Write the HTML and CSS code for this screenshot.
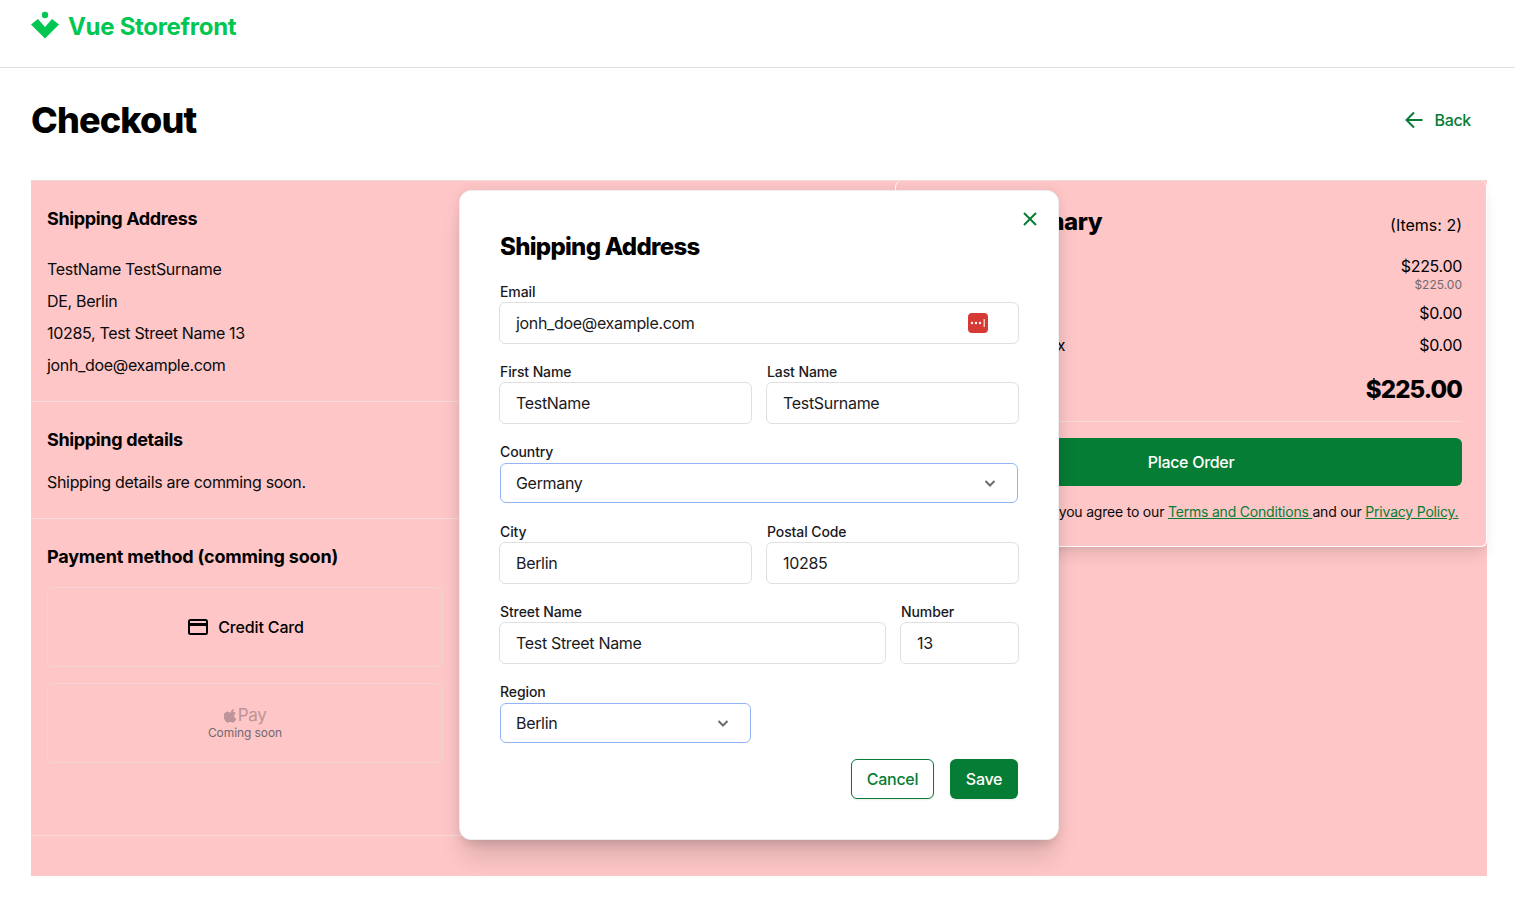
FILE: index.html
```html
<!DOCTYPE html>
<html lang="en">
<head>
<meta charset="utf-8">
<title>Checkout</title>
<link rel="stylesheet" href="styles.css">
</head>
<body>
<header class="topbar">
  <a class="logo">
    <svg class="logo-mark" width="28" height="28" viewBox="0 0 28 28"><circle cx="14" cy="4" r="3.200" fill="#02c652"/><path d="M0 13.500 7 8 14 16 21 8 28 13.500 14 27.500Z" fill="#02c652"/></svg>
    <span class="logo-text">Vue Storefront</span>
  </a>
</header>
<div class="title-row">
  <h1 class="page-title">Checkout</h1>
  <a class="back">
    <svg width="24" height="24" viewBox="0 0 24 24" fill="none" stroke="#067d35" stroke-width="2"><path d="M20.500 12H4.500M12 4.500 4.500 12l7.500 7.500"/></svg>
    <span>Back</span>
  </a>
</div>
<main class="checkout">
  <div class="left-col">
    <section class="panel panel-address">
      <h2 class="panel-title">Shipping Address</h2>
      <p class="line">TestName TestSurname</p>
      <p class="line">DE, Berlin</p>
      <p class="line">10285, Test Street Name 13</p>
      <p class="line">jonh_doe@example.com</p>
    </section>
    <section class="panel panel-details">
      <h2 class="panel-title">Shipping details</h2>
      <p class="line">Shipping details are comming soon.</p>
    </section>
    <section class="panel panel-payment">
      <h2 class="panel-title">Payment method (comming soon)</h2>
      <div class="pay-list">
        <div class="pay-box">
          <svg width="24" height="24" viewBox="0 0 24 24" fill="none" stroke="#000" stroke-width="2"><rect x="3" y="5" width="18" height="14" rx="1.500"/><path d="M3 9.500h18" stroke-width="3"/></svg>
          <span class="pay-label">Credit Card</span>
        </div>
        <div class="pay-box pay-soon">
          <div class="apple-pay">
            <svg width="13" height="15" viewBox="0 0 14 16"><path fill="#bd9499" d="M10.600 1c.1 1-.3 1.800-.8 2.400-.6.700-1.400 1.100-2.200 1-.1-.9.300-1.800.8-2.300C9 1.400 9.900 1 10.600 1ZM13.400 11.500c-.4.900-.6 1.300-1.100 2-.7 1-1.600 2.200-2.800 2.200-1 0-1.300-.7-2.700-.7s-1.700.7-2.700.7c-1.200 0-2.100-1.100-2.800-2.100C-.6 11-.8 7.700.4 5.900 1.200 4.600 2.500 3.900 3.700 3.900c1.200 0 2 .8 3 .8s1.600-.8 3-.8c1.100 0 2.200.6 3 1.600-2.600 1.500-2.200 5 .7 6Z"/></svg>
            <span>Pay</span>
          </div>
          <span class="soon-text">Coming soon</span>
        </div>
      </div>
    </section>
  </div>
  <aside class="summary">
    <div class="summary-head">
      <h2 class="summary-title">Order Summary</h2>
      <span class="items">(Items: 2)</span>
    </div>
    <div class="sum-row sum-first"><span>Subtotal</span><span class="amount-stack"><span>$225.00</span><small>$225.00</small></span></div>
    <div class="sum-row"><span>Delivery</span><span>$0.00</span></div>
    <div class="sum-row"><span>Estimated Sales Tax</span><span>$0.00</span></div>
    <div class="sum-total"><span>Total</span><span>$225.00</span></div>
    <div class="place-wrap">
      <button class="place-order">Place Order</button>
      <p class="terms">By placing my order, you agree to our <a>Terms and Conditions </a>and our <a>Privacy Policy.</a></p>
    </div>
  </aside>
</main>
<div class="modal">
  <svg class="modal-close" width="24" height="24" viewBox="0 0 24 24" fill="none" stroke="#067d35" stroke-width="2"><path d="M6 6l12 12M18 6 6 18"/></svg>
  <h2 class="modal-title">Shipping Address</h2>
  <form class="form">
    <label class="field span-6"><span class="label">Email</span>
      <span class="input input-pass">jonh_doe@example.com
        <svg class="pass-icon" width="20" height="20" viewBox="0 0 20 20"><rect width="20" height="20" rx="4" fill="#d63a34"/><circle cx="4" cy="10" r="1.200" fill="#fff"/><circle cx="8" cy="10" r="1.200" fill="#fff"/><circle cx="12" cy="10" r="1.200" fill="#fff"/><rect x="15.500" y="6" width="1.500" height="8" fill="#f3c5c2"/></svg>
      </span>
    </label>
    <label class="field span-3"><span class="label">First Name</span><span class="input">TestName</span></label>
    <label class="field span-3"><span class="label">Last Name</span><span class="input">TestSurname</span></label>
    <label class="field span-6"><span class="label">Country</span>
      <span class="select">Germany<svg width="20" height="20" viewBox="0 0 20 20" fill="none" stroke="#6b6b72" stroke-width="2"><path d="M5.500 8 10 12.500 14.500 8"/></svg></span>
    </label>
    <label class="field span-3"><span class="label">City</span><span class="input">Berlin</span></label>
    <label class="field span-3"><span class="label">Postal Code</span><span class="input">10285</span></label>
    <div class="street-row span-6">
      <label class="field"><span class="label">Street Name</span><span class="input">Test Street Name</span></label>
      <label class="field"><span class="label">Number</span><span class="input">13</span></label>
    </div>
    <label class="field span-3 region"><span class="label">Region</span>
      <span class="select">Berlin<svg width="20" height="20" viewBox="0 0 20 20" fill="none" stroke="#6b6b72" stroke-width="2"><path d="M5.500 8 10 12.500 14.500 8"/></svg></span>
    </label>
  </form>
  <div class="modal-actions">
    <button class="btn btn-outline" type="button">Cancel</button>
    <button class="btn btn-solid" type="button">Save</button>
  </div>
</div>
</body>
</html>
```
FILE: styles.css
```css
* { box-sizing: border-box; }
html, body { margin: 0; padding: 0; }
body {
  position: relative;
  height: 902px;
  overflow: hidden;
  background: #fff;
  color: #000;
  font-family: Inter, "Liberation Sans", sans-serif;
  font-size: 16px;
  letter-spacing: -0.32px;
}
h1, h2, p { margin: 0; }

.topbar {
  height: 68px;
  padding: 11px 31px 0;
  border-bottom: 1px solid #e0e0e1;
}
.logo { display: flex; align-items: flex-start; gap: 9px; }
.logo-mark { flex: none; }
.logo-text {
  font-weight: 700;
  font-size: 24px;
  line-height: 31px;
  letter-spacing: -0.3px;
  color: #02c652;
}

.title-row {
  height: 112px;
  padding: 0 44px 0 31px;
  display: flex;
  align-items: center;
  justify-content: space-between;
}
.page-title {
  font-size: 36px;
  line-height: 44px;
  font-weight: 800;
  letter-spacing: -0.85px;
  margin-top: -8px;
}
.back {
  display: flex;
  align-items: center;
  gap: 9px;
  margin-top: -8px;
  font-weight: 500;
  color: #067d35;
}

.checkout {
  margin: 0 28px 0 31px;
  height: 696px;
  background: #fec6c6;
  border-top: 1px solid #eed9d9;
  display: flex;
  align-items: flex-start;
}
.left-col { width: 864px; flex: none; }
.panel {
  padding: 0 16px;
  border-bottom: 1px solid #f5dcdc;
}
.panel-address { height: 221px; padding-top: 25px; }
.panel-details { height: 117px; padding-top: 25px; }
.panel-payment { height: 317px; padding-top: 25px; }
.panel-title {
  font-size: 18px;
  line-height: 26px;
  font-weight: 700;
  letter-spacing: -0.35px;
  margin-bottom: 13px;
}
.panel-address .panel-title { margin-bottom: 21px; }
.panel-payment .panel-title { margin-bottom: 17px; letter-spacing: -0.18px; }
.line { line-height: 32px; color: #0a0a0c; }
.pay-list {
  width: 396px;
  display: flex;
  flex-direction: column;
  gap: 16px;
}
.pay-box {
  height: 80px;
  border: 1px solid #f0d5d8;
  border-radius: 6px;
  display: flex;
  align-items: center;
  justify-content: center;
  gap: 8px;
  font-weight: 500;
}
.pay-label { letter-spacing: -0.15px; }
.pay-soon { flex-direction: column; gap: 0; }
.apple-pay {
  display: flex;
  align-items: center;
  gap: 1px;
  font-size: 17px;
  line-height: 20px;
  font-weight: 400;
  color: #bd9499;
}
.soon-text {
  font-size: 12px;
  line-height: 16px;
  font-weight: 400;
  color: #72696f;
  letter-spacing: -0.07px;
}

.summary {
  width: 592px;
  height: 366px;
  padding: 25px 24px 0;
  border: 1px solid #fff;
  border-width: 0 1px 1px 1px;
  border-radius: 6px;
  box-shadow: 0 10px 15px -3px rgba(0,0,0,.1), 0 4px 6px -2px rgba(0,0,0,.05);
}
.summary-head {
  display: flex;
  justify-content: space-between;
  align-items: flex-end;
  margin-bottom: 16px;
}
.summary-title {
  font-size: 24px;
  line-height: 32px;
  font-weight: 800;
  letter-spacing: -0.45px;
}
.sum-row {
  display: flex;
  justify-content: space-between;
  align-items: flex-start;
  line-height: 24px;
  margin-bottom: 8px;
}
.items { line-height: 24px; margin-bottom: 1px; letter-spacing: 0; }
.sum-first { margin-bottom: 9px; }
.amount-stack { display: flex; flex-direction: column; align-items: flex-end; }
.amount-stack small { font-size: 12px; line-height: 14px; color: #72696f; letter-spacing: 0; }
.sum-total {
  display: flex;
  justify-content: space-between;
  font-size: 24px;
  line-height: 32px;
  font-weight: 800;
  letter-spacing: -0.9px;
  margin-top: 17px;
  padding-bottom: 15px;
  border-bottom: 1px solid #f5dcdc;
}
.place-wrap { padding-top: 16px; }
.place-order {
  display: block;
  width: 100%;
  height: 48px;
  border: 0;
  border-radius: 6px;
  background: #067d35;
  color: #fff;
  font: 500 16px Inter, sans-serif;
  letter-spacing: -0.3px;
}
.terms {
  margin-top: 14px;
  font-size: 14px;
  line-height: 24px;
  text-align: center;
  white-space: nowrap;
  letter-spacing: -0.2px;
  color: #0a0a0c;
}
.terms a { color: #067d35; text-decoration: underline; }

.modal {
  position: absolute;
  left: 459px;
  top: 190px;
  width: 600px;
  height: 650px;
  padding: 40px 40px 0;
  background: #fff;
  border: 1px solid #eee;
  border-radius: 12px;
  box-shadow: 0 20px 25px -5px rgba(0,0,0,.14), 0 10px 10px -5px rgba(0,0,0,.07), 0 0 12px rgba(0,0,0,.08);
}
.modal-close { position: absolute; right: 16px; top: 16px; }
.modal-title {
  font-size: 24px;
  line-height: 32px;
  font-weight: 800;
  letter-spacing: -0.7px;
  margin-bottom: 19px;
}
.form {
  display: grid;
  grid-template-columns: repeat(2, 251px);
  column-gap: 16px;
  row-gap: 18px;
}
.span-6 { grid-column: span 2; }
.span-3 { grid-column: span 1; }
.field { display: flex; flex-direction: column; }
.label {
  font-size: 14px;
  line-height: 20px;
  font-weight: 500;
  letter-spacing: -0.1px;
  color: #1a1a1e;
}
.input {
  height: 42px;
  margin: 0 -1px;
  display: flex;
  align-items: center;
  justify-content: space-between;
  padding: 0 16px;
  border: 1px solid #e0e0e1;
  border-radius: 6px;
  color: #1a1a1e;
  background: #fff;
}
.pass-icon { margin-right: 14px; }
.select {
  height: 40px;
  margin: 1px 0;
  display: flex;
  align-items: center;
  justify-content: space-between;
  padding: 0 17px 0 15px;
  border: 1px solid #93b5f6;
  border-radius: 6px;
  color: #1a1a1e;
  background: #fff;
}
.street-row {
  display: grid;
  grid-template-columns: 385px 117px;
  column-gap: 16px;
}
.modal-actions {
  display: flex;
  justify-content: flex-end;
  gap: 16px;
  margin-top: 15px;
}
.btn {
  height: 40px;
  border-radius: 6px;
  font: 500 16px Inter, sans-serif;
  letter-spacing: -0.3px;
  padding: 0;
  box-shadow: 0 1px 2px rgba(0,0,0,.08);
}
.btn-outline {
  width: 83px;
  background: #fff;
  color: #067d35;
  border: 1px solid #067d35;
}
.btn-solid {
  width: 68px;
  background: #067d35;
  color: #fff;
  border: 0;
}
```
